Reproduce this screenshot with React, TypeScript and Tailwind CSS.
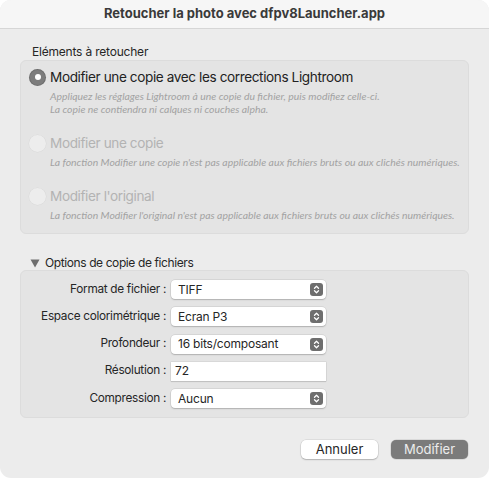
import React from 'react';

const ui = { fontFamily: 'Inter, "Liberation Sans", sans-serif' };
const note = { fontFamily: 'Lato, "Liberation Sans", sans-serif' };

function Stepper() {
  return (
    <span className="flex h-[13px] w-[13px] items-center justify-center rounded-[3px] bg-[#6e6e6e]">
      <svg width="7" height="9" viewBox="0 0 7 9" fill="none" stroke="#fff" strokeWidth="1.3" strokeLinecap="round" strokeLinejoin="round">
        <path d="M1.5 3.2 3.5 1.3 5.5 3.2" />
        <path d="M1.5 5.8 3.5 7.7 5.5 5.8" />
      </svg>
    </span>
  );
}

function Select({ value }: { value: string }) {
  return (
    <div className="flex h-[19px] w-[155px] items-center justify-between rounded-[4px] bg-white pl-[7px] pr-[3px] text-[12px] tracking-[-0.2px] text-[#262626] shadow-[0_0_0_0.5px_rgba(0,0,0,0.12),0_1px_1.5px_rgba(0,0,0,0.18)]">
      <span>{value}</span>
      <Stepper />
    </div>
  );
}

function Row({ label, children }: { label: string; children: React.ReactNode }) {
  return (
    <div className="flex h-[19px] shrink-0 items-center">
      <div className="w-[150px] pr-[5px] text-right text-[11.8px] tracking-[-0.3px] text-[#262626]">{label}</div>
      {children}
    </div>
  );
}

function Radio({ on, label, lines }: { on?: boolean; label: string; lines: string[] }) {
  return (
    <div className="flex flex-col">
      <div className="flex h-[18px] items-center gap-[4px]">
        {on ? (
          <span className="flex h-[17px] w-[17px] items-center justify-center rounded-full bg-[#7d7d7d] shadow-[inset_0_0_0_1px_rgba(0,0,0,0.12)]">
            <span className="h-[6px] w-[6px] rounded-full bg-white" />
          </span>
        ) : (
          <span className="h-[17px] w-[17px] rounded-full bg-[#ededed] shadow-[0_0_0_0.5px_rgba(0,0,0,0.05)]" />
        )}
        <span className={`text-[13.6px] tracking-[-0.4px] ${on ? 'text-[#222]' : 'text-[#b3b3b3]'}`}>{label}</span>
      </div>
      <div className="mt-[4px] whitespace-nowrap pl-[21px] text-[10.4px] italic leading-[13px] text-[#a2a2a2]" style={note}>
        {lines.map((l) => (
          <div key={l}>{l}</div>
        ))}
      </div>
    </div>
  );
}

export default function App() {
  return (
    <div className="h-[478px] w-[489px] bg-white" style={ui}>
      <div className="flex h-full w-full flex-col overflow-hidden rounded-[11px] bg-[#ececec]">
        {/* Title bar */}
        <div className="flex h-[29px] items-center justify-center border-b border-[#d6d6d6] bg-[#f6f6f6] text-[13px] font-bold text-[#3a3a3a]">
          Retoucher la photo avec dfpv8Launcher.app
        </div>

        <div className="flex flex-1 flex-col px-[20px] pt-[15px]">
          <div className="pl-[12px] text-[12px] leading-[15px] tracking-[-0.2px] text-[#262626]">Eléments à retoucher</div>

          <div className="mt-[1px] flex h-[174px] flex-col gap-[18px] rounded-[6px] border border-[#dcdcdc] bg-[#e4e4e4] pl-[8px] pt-[7px]">
            <Radio
              on
              label="Modifier une copie avec les corrections Lightroom"
              lines={[
                'Appliquez les réglages Lightroom à une copie du fichier, puis modifiez celle-ci.',
                'La copie ne contiendra ni calques ni couches alpha.',
              ]}
            />
            <Radio
              label="Modifier une copie"
              lines={["La fonction Modifier une copie n'est pas applicable aux fichiers bruts ou aux clichés numériques."]}
            />
            <Radio
              label="Modifier l'original"
              lines={["La fonction Modifier l'original n'est pas applicable aux fichiers bruts ou aux clichés numériques."]}
            />
          </div>

          <div className="mt-[22px] flex h-[14px] items-center gap-[5px] pl-[10px] text-[12px] tracking-[-0.4px] text-[#262626]">
            <svg width="10" height="9" viewBox="0 0 10 9">
              <path d="M0.5 0.5h9L5 8.5z" fill="#6e6e6e" />
            </svg>
            Options de copie de fichiers
          </div>

          <div className="flex h-[148px] flex-col gap-[8.25px] rounded-[6px] border border-[#dcdcdc] bg-[#e4e4e4] pt-[9px]">
            <Row label="Format de fichier :">
              <Select value="TIFF" />
            </Row>
            <Row label="Espace colorimétrique :">
              <Select value="Ecran P3" />
            </Row>
            <Row label="Profondeur :">
              <Select value="16 bits/composant" />
            </Row>
            <Row label="Résolution :">
              <div className="flex h-[19px] w-[155px] items-center bg-white pl-[4px] text-[12px] text-[#262626] shadow-[0_0_0_0.5px_rgba(0,0,0,0.1),0_1px_1px_rgba(0,0,0,0.1)]">
                72
              </div>
            </Row>
            <Row label="Compression :">
              <Select value="Aucun" />
            </Row>
          </div>

          <div className="mt-[22px] flex justify-end gap-[13px] pr-[1px]">
            <button className="h-[19px] w-[77px] rounded-[5px] bg-white text-[13px] text-[#262626] shadow-[0_0_0_0.5px_rgba(0,0,0,0.12),0_1px_1.5px_rgba(0,0,0,0.2)]">
              Annuler
            </button>
            <button className="h-[19px] w-[77px] rounded-[5px] bg-[#7b7b7b] text-[13px] text-[#ececec] shadow-[0_0_0_0.5px_rgba(0,0,0,0.15)]">
              Modifier
            </button>
          </div>
        </div>
      </div>
    </div>
  );
}
